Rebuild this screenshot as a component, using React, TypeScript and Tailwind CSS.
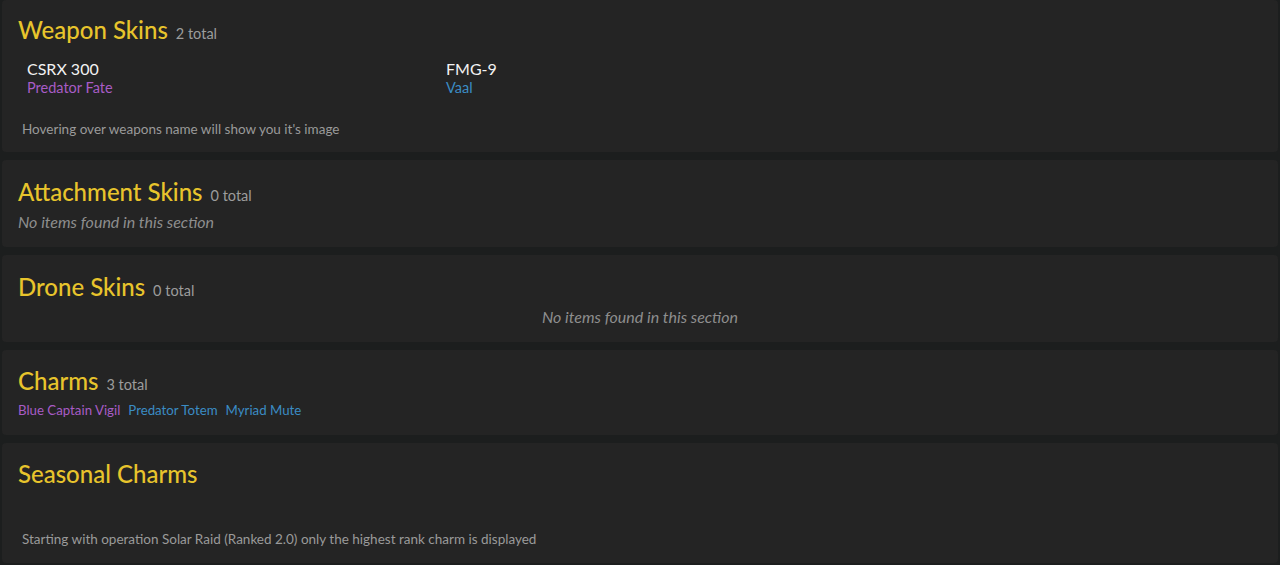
import React from 'react';

type Item = { name: string; color: string };

const font = { fontFamily: 'Lato, "Open Sans", sans-serif' };

const SectionTitle: React.FC<{ title: string; total?: number }> = ({ title, total }) => (
  <div className="flex items-baseline gap-2">
    <h2 className="text-[24px] leading-8 font-medium text-[#e8c42c]">{title}</h2>
    {total !== undefined && <span className="text-[14.5px] text-[#9c9c9c]">{total} total</span>}
  </div>
);

const Empty: React.FC<{ center?: boolean }> = ({ center }) => (
  <p className={`text-[16px] leading-5 italic text-[#8e8e8e] mt-1 ${center ? 'text-center' : ''}`}>
    No items found in this section
  </p>
);

const weapons = [
  { weapon: 'CSRX 300', skin: 'Predator Fate', color: 'text-[#a85cc6]' },
  { weapon: 'FMG-9', skin: 'Vaal', color: 'text-[#3b8cc4]' },
];

const charms: Item[] = [
  { name: 'Blue Captain Vigil', color: 'text-[#a85cc6]' },
  { name: 'Predator Totem', color: 'text-[#3b8cc4]' },
  { name: 'Myriad Mute', color: 'text-[#3b8cc4]' },
];

export default function App() {
  return (
    <div className="min-h-screen bg-[#1c1e1e] px-[2px] flex flex-col gap-2" style={font}>
      <section className="bg-[#242424] rounded px-4 pt-[14px] pb-[13px]">
        <SectionTitle title="Weapon Skins" total={2} />
        <div className="grid grid-cols-[419px_1fr] mt-3 px-[9px]">
          {weapons.map((w) => (
            <div key={w.weapon} className="flex flex-col">
              <span className="text-[16px] leading-[22px] text-[#f2f2f2]">{w.weapon}</span>
              <span className={`text-[14.5px] leading-4 ${w.color}`}>{w.skin}</span>
            </div>
          ))}
        </div>
        <p className="mt-[23px] px-1 text-[13.5px] leading-5 text-[#9a9a9a]">
          Hovering over weapons name will show you it's image
        </p>
      </section>

      <section className="bg-[#242424] rounded px-4 pt-4 pb-[15px]">
        <SectionTitle title="Attachment Skins" total={0} />
        <Empty />
      </section>

      <section className="bg-[#242424] rounded px-4 pt-4 pb-[15px]">
        <SectionTitle title="Drone Skins" total={0} />
        <Empty center />
      </section>

      <section className="bg-[#242424] rounded px-4 pt-[15px] pb-4">
        <SectionTitle title="Charms" total={3} />
        <div className="flex gap-2 mt-1 text-[13.25px] leading-[18px]">
          {charms.map((c) => (
            <span key={c.name} className={c.color}>{c.name}</span>
          ))}
        </div>
      </section>

      <section className="bg-[#242424] rounded px-4 pt-[15px] pb-[15px]">
        <SectionTitle title="Seasonal Charms" />
        <div className="h-10" />
        <p className="px-1 text-[13.5px] leading-[18px] text-[#9a9a9a]">
          Starting with operation Solar Raid (Ranked 2.0) only the highest rank charm is displayed
        </p>
      </section>
    </div>
  );
}
